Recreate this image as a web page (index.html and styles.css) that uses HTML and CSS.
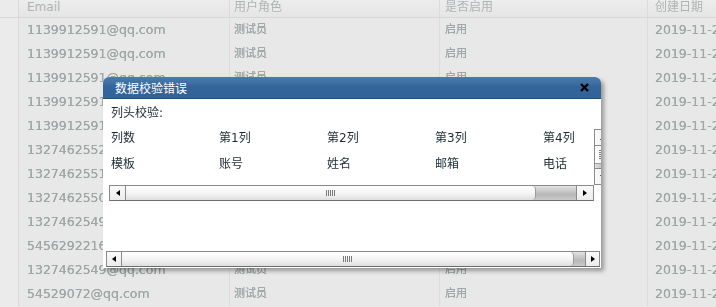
FILE: index.html
```html
<!DOCTYPE html>
<html lang="zh-CN">
<head>
  <meta charset="UTF-8">
  <title>数据校验错误</title>
  <link rel="stylesheet" href="styles.css">
</head>
<body>
  <!-- 背景用户列表 -->
  <div class="grid">
    <div class="grid-head">
      <div class="c0"></div><div class="c1">Email</div><div class="c2">用户角色</div><div class="c3">是否启用</div><div class="c4">创建日期</div>
    </div>
    <div class="grid-row"><div class="c0"></div><div class="c1">1139912591@qq.com</div><div class="c2">测试员</div><div class="c3">启用</div><div class="c4">2019-11-21</div></div>
    <div class="grid-row"><div class="c0"></div><div class="c1">1139912591@qq.com</div><div class="c2">测试员</div><div class="c3">启用</div><div class="c4">2019-11-21</div></div>
    <div class="grid-row"><div class="c0"></div><div class="c1">1139912591@qq.com</div><div class="c2">测试员</div><div class="c3">启用</div><div class="c4">2019-11-21</div></div>
    <div class="grid-row"><div class="c0"></div><div class="c1">1139912591@qq.com</div><div class="c2">测试员</div><div class="c3">启用</div><div class="c4">2019-11-21</div></div>
    <div class="grid-row"><div class="c0"></div><div class="c1">1139912591@qq.com</div><div class="c2">测试员</div><div class="c3">启用</div><div class="c4">2019-11-21</div></div>
    <div class="grid-row"><div class="c0"></div><div class="c1">1327462552@qq.com</div><div class="c2">测试员</div><div class="c3">启用</div><div class="c4">2019-11-21</div></div>
    <div class="grid-row"><div class="c0"></div><div class="c1">1327462551@qq.com</div><div class="c2">测试员</div><div class="c3">启用</div><div class="c4">2019-11-21</div></div>
    <div class="grid-row"><div class="c0"></div><div class="c1">1327462550@qq.com</div><div class="c2">测试员</div><div class="c3">启用</div><div class="c4">2019-11-21</div></div>
    <div class="grid-row"><div class="c0"></div><div class="c1">1327462549@qq.com</div><div class="c2">测试员</div><div class="c3">启用</div><div class="c4">2019-11-21</div></div>
    <div class="grid-row"><div class="c0"></div><div class="c1">5456292216@qq.com</div><div class="c2">测试员</div><div class="c3">启用</div><div class="c4">2019-11-21</div></div>
    <div class="grid-row"><div class="c0"></div><div class="c1">1327462549@qq.com</div><div class="c2">测试员</div><div class="c3">启用</div><div class="c4">2019-11-21</div></div>
    <div class="grid-row"><div class="c0"></div><div class="c1">54529072@qq.com</div><div class="c2">测试员</div><div class="c3">启用</div><div class="c4">2019-11-21</div></div>
  </div>

  <!-- 弹窗 -->
  <div class="dialog">
    <div class="dialog-title">
      <span>数据校验错误</span>
      <svg class="close" width="9" height="9" viewBox="0 0 9 9"><path d="M1 1L8 8M8 1L1 8" stroke="#000" stroke-width="2.3"/></svg>
    </div>
    <div class="dialog-body">
      <div class="label">列头校验:</div>
      <div class="inner">
        <div class="inner-main">
          <div class="sheet">
            <div class="sheet-row"><div>列数</div><div>第1列</div><div>第2列</div><div>第3列</div><div>第4列</div></div>
            <div class="sheet-row"><div>模板</div><div>账号</div><div>姓名</div><div>邮箱</div><div>电话</div></div>
          </div>
          <div class="hbar">
            <div class="sb-btn"><i class="arr-l"></i></div>
            <div class="thumb thumb-a"><i class="grip"></i></div>
            <div class="track"></div>
            <div class="sb-btn sb-end"><i class="arr-r"></i></div>
          </div>
        </div>
        <div class="vbar">
          <div class="vb-btn"><i class="arr-u"></i></div>
          <div class="vthumb"><i class="vgrip"></i></div>
          <div class="vtrack"></div>
          <div class="vb-btn vb-end"><i class="arr-d"></i></div>
        </div>
      </div>
      <div class="spacer"></div>
      <div class="hbar hbar-b">
        <div class="sb-btn sb-small"><i class="arr-l"></i></div>
        <div class="thumb thumb-b"><i class="grip"></i></div>
        <div class="track"></div>
        <div class="sb-btn sb-end sb-small"><i class="arr-r"></i></div>
      </div>
    </div>
  </div>
</body>
</html>
```

FILE: styles.css
```css
* { box-sizing: border-box; }
body { margin: 0; width: 716px; height: 307px; overflow: hidden; position: relative; background: #e8e8e8; font-family: "DejaVu Sans", "Noto Sans CJK SC", sans-serif; }

/* background grid (masked) */
.grid { filter: blur(0.7px); }
.grid-head { display: flex; height: 18px; line-height: 15px; font-size: 12px; color: #adb3b3; background: linear-gradient(#ededed, #e5e5e5); border-bottom: 1px solid #d7d7d7; }
.grid-row { display: flex; height: 24px; line-height: 24px; font-size: 12.5px; color: #9ea6a6; text-shadow: 0 0 0.5px #9ea6a6; }
.c0 { width: 19px; flex: none; background: #ebebeb; border-right: 1px solid #dadada; }
.c1 { width: 211px; flex: none; padding-left: 8px; border-right: 1px solid #dcdcdc; white-space: nowrap; overflow: hidden; }
.c2 { width: 210px; flex: none; padding-left: 4px; border-right: 1px solid #dcdcdc; }
.c3 { width: 208px; flex: none; padding-left: 5px; border-right: 1px solid #dcdcdc; }
.c4 { flex: none; padding-left: 7px; white-space: nowrap; }
.grid-row .c2, .grid-row .c3 { font-size: 11px; }

/* dialog */
.dialog { position: absolute; left: 103px; top: 77px; width: 498px; height: 191px; background: #fff; border-radius: 6px 6px 0 0; box-shadow: 3px 3px 4px rgba(0,0,0,.35); overflow: hidden; display: flex; flex-direction: column; }
.dialog-title { height: 22px; flex: none; display: flex; align-items: center; justify-content: space-between; padding: 0 12px; color: #fff; font-size: 12px; background: linear-gradient(#4a7bac 0, #3e6fa1 30%, #33659a 45%, #31639a 100%); border-bottom: 1px solid #23507d; }
.close { display: block; }
.dialog-body { flex: 1; display: flex; flex-direction: column; padding: 0 0 1px 3px; font-size: 12px; color: #1d2b31; }
.label { margin-top: 4px; line-height: 20px; padding-left: 5px; }
.inner { display: flex; flex: none; width: 502px; margin: 6px 0 0 3px; }
.inner-main { width: 485px; flex: none; }
.sheet { height: 56px; }
.sheet-row { display: flex; height: 26px; line-height: 18px; }
.sheet-row div { width: 108px; flex: none; padding-left: 2px; }
.spacer { flex: 1; }

/* fake scrollbars */
.hbar { display: flex; height: 16px; border: 1px solid #8a8a8a; border-bottom-color: #6e6e6e; background: linear-gradient(#e2e2e2, #b8b8b8 60%, #cacaca); }
.hbar-b { width: 494px; }
.sb-btn { width: 16px; flex: none; display: flex; align-items: center; justify-content: center; background: linear-gradient(#fafafa, #ececec); border-right: 1px solid #8a8a8a; }
.sb-end { width: 17px; border-right: none; border-left: 1px solid #8a8a8a; }
.sb-small { width: 15px; }
.sb-end.sb-small { width: 14px; }
.thumb { flex: none; display: flex; align-items: center; justify-content: center; background: linear-gradient(#ffffff, #f3f3f3 55%, #dedede); border-right: 1px solid #9c9c9c; border-radius: 0 4px 4px 0; }
.thumb-a { width: 410px; }
.thumb-b { width: 452px; }
.track { flex: 1; }
.grip { display: block; width: 9px; height: 6px; background: repeating-linear-gradient(90deg, #7a7a7a 0 1px, transparent 1px 2px); }
.arr-l, .arr-r, .arr-u, .arr-d { display: block; width: 0; height: 0; }
.arr-l { border-right: 4px solid #000; border-top: 3px solid transparent; border-bottom: 3px solid transparent; }
.arr-r { border-left: 4px solid #000; border-top: 3px solid transparent; border-bottom: 3px solid transparent; }
.arr-u { border-bottom: 4px solid #000; border-left: 3px solid transparent; border-right: 3px solid transparent; }
.arr-d { border-top: 4px solid #000; border-left: 3px solid transparent; border-right: 3px solid transparent; }

.vbar { width: 17px; height: 56px; flex: none; display: flex; flex-direction: column; border: 1px solid #8a8a8a; background: linear-gradient(90deg, #e2e2e2, #b8b8b8 60%, #cacaca); }
.vb-btn { height: 16px; flex: none; display: flex; align-items: center; justify-content: center; background: linear-gradient(90deg, #fafafa, #ececec); border-bottom: 1px solid #8a8a8a; }
.vb-end { border-bottom: none; border-top: 1px solid #8a8a8a; }
.vthumb { height: 18px; flex: none; display: flex; align-items: center; justify-content: center; background: linear-gradient(90deg, #ffffff, #f3f3f3 55%, #dedede); border-bottom: 1px solid #9c9c9c; }
.vgrip { display: block; width: 7px; height: 9px; background: repeating-linear-gradient(180deg, #7a7a7a 0 1px, transparent 1px 2px); }
.vtrack { flex: 1; }
```
